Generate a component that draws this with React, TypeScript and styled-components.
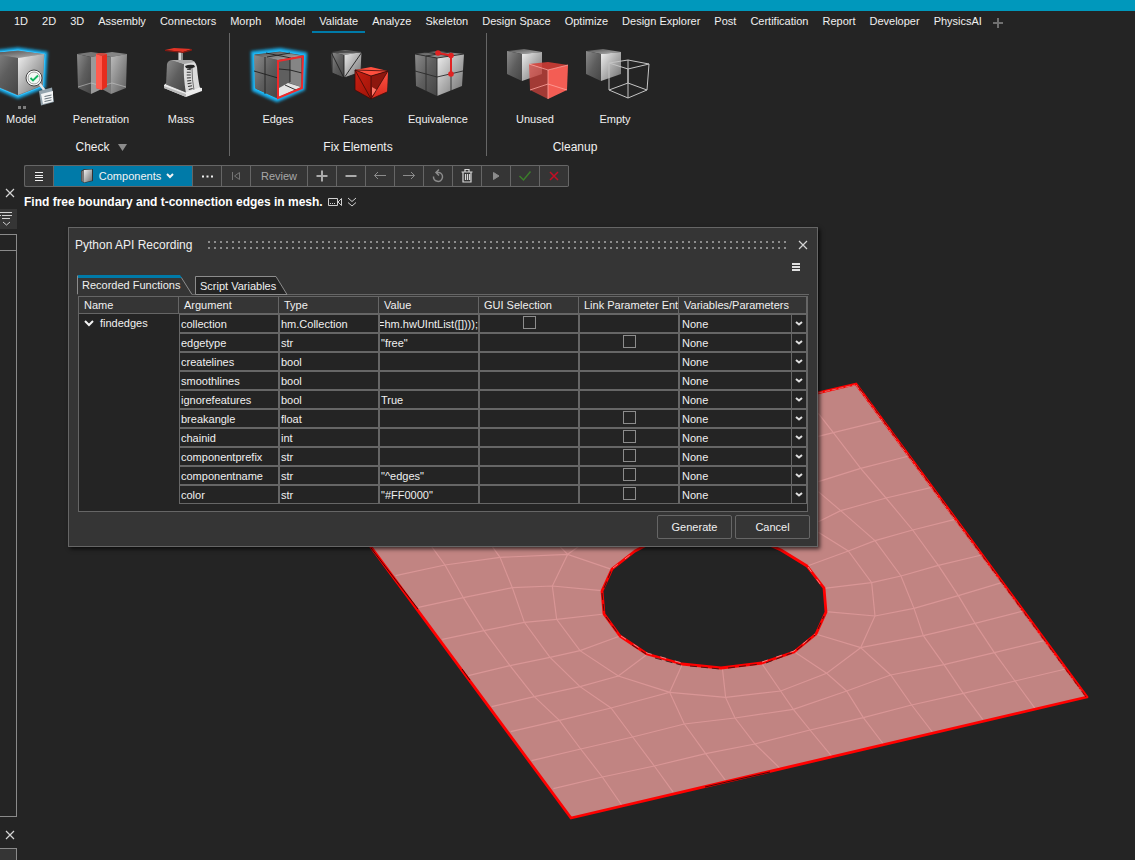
import React from "react";
import styled, { createGlobalStyle, css } from "styled-components";

const GlobalStyle = createGlobalStyle`
  *, *::before, *::after { box-sizing: border-box; }
  body {
    margin: 0;
    background: #242424;
    color: #f0f0f0;
    font-family: "Liberation Sans", Arial, sans-serif;
    font-size: 11px;
    overflow: hidden;
  }
  button, select, input { font: inherit; color: inherit; }
`;

const line = "#666666";

const Page = styled.div`
  display: flex;
  flex-direction: column;
  min-height: 100vh;
`;

const TitleStrip = styled.div`
  height: 11px;
  background: #0098bc;
`;

const PlainButton = styled.button`
  display: inline-flex;
  align-items: center;
  justify-content: center;
  margin: 0;
  padding: 0;
  border: 0;
  background: none;
`;

const MenuBar = styled.nav`
  display: flex;
  height: 22px;
  padding-left: 7px;
`;

const MenuTab = styled(PlainButton)<{ $active?: boolean }>`
  padding: 0 7px 2px;
  white-space: nowrap;
  border-top: 2px solid transparent;
  border-bottom: 2px solid ${(p) => (p.$active ? "#007aa8" : "transparent")};
`;

const AddTab = styled(PlainButton)`
  padding: 2px 0 0 3px;
`;

const Ribbon = styled.section`
  display: flex;
  height: 125px;
  overflow: hidden;
`;

const RibbonGroup = styled.div<{ $bleed?: boolean }>`
  display: flex;
  flex-direction: column;
  flex: none;
  padding: 9px 8px 0;
  height: 123px;
  border-right: 1px solid ${line};
  ${(p) => p.$bleed && css`margin-left: -27px;`}
  &:last-child { border-right: 0; }
`;

const RibbonItems = styled.div`
  display: flex;
`;

const RibbonItem = styled(PlainButton)`
  flex-direction: column;
  width: 80px;
  line-height: 18px;
  svg { display: block; }
`;

const GroupLabel = styled.div`
  display: flex;
  justify-content: center;
  align-items: center;
  gap: 8px;
  margin-top: 10px;
  line-height: 18px;
  font-size: 12px;
`;

const Body = styled.div`
  display: flex;
  flex: 1;
`;

const Sidebar = styled.aside`
  display: flex;
  flex-direction: column;
  width: 17px;
  flex: none;
`;

const SideClose = styled(PlainButton)<{ $first?: boolean }>`
  height: ${(p) => (p.$first ? 51 : 31)}px;
  padding: ${(p) => (p.$first ? "19px 0 0 3px" : "5px 0 0 3px")};
`;

const SideFilter = styled(PlainButton)`
  height: 20px;
  background: #353535;
`;

const SidePanel = styled.div`
  flex: 1;
  margin-top: 5px;
  border: 1px solid #8a8a8a;
  border-left: 0;
  &::before {
    content: "";
    display: block;
    height: 16px;
    border-bottom: 1px solid #8a8a8a;
  }
`;

const SideFooter = styled.div`
  height: 12px;
  border: 1px solid #8a8a8a;
  border-width: 1px 1px 0 0;
  background: #353535;
`;

const Main = styled.main`
  display: flex;
  flex-direction: column;
  flex: 1;
  min-width: 0;
`;

const Toolbar = styled.div`
  display: flex;
  align-self: flex-start;
  height: 22px;
  margin: 7px 0 0 7px;
  border: 1px solid ${line};
  border-right: 0;
  border-radius: 2px;
  background: #353535;
`;

const Tool = styled(PlainButton)<{ $w?: number; $primary?: boolean }>`
  width: ${(p) => p.$w ?? 29}px;
  gap: 5px;
  border-right: 1px solid ${line};
  color: #a8a8a8;
  ${(p) => p.$primary && css`
    padding-left: 8px;
    background: #007aa8;
    color: #f4f4f4;
  `}
`;

const Message = styled.div`
  display: flex;
  align-items: center;
  gap: 4px;
  height: 25px;
  padding: 4px 0 0 7px;
  font: bold 12px "Liberation Sans", Arial, sans-serif;
  color: #ffffff;
  span { white-space: nowrap; }
`;

const Viewport = styled.div`
  position: relative;
  flex: 1;
  min-height: 500px;
`;

const Scene = styled.svg`
  position: absolute;
  inset: 0;
  width: 100%;
  height: 100%;
`;

const Dialog = styled.section`
  position: absolute;
  top: 15px;
  left: 51px;
  width: 750px;
  padding: 0 9px 7px;
  border: 1px solid ${line};
  background: #353535;
  box-shadow: 2px 2px 4px rgba(0, 0, 0, 0.7);
`;

const DialogTitle = styled.header`
  display: flex;
  align-items: center;
  height: 34px;
  margin-left: -3px;
  h1 {
    margin: 0;
    font: 12px "Liberation Sans", Arial, sans-serif;
    white-space: nowrap;
  }
`;

const Grip = styled.div`
  flex: 1;
  height: 8px;
  margin: 0 11px 0 16px;
  background: conic-gradient(from 270deg at 2px 2px, #8c8c8c 90deg, transparent 0) 0 0 / 6px 6px;
`;

const DialogTools = styled.div`
  display: flex;
  justify-content: flex-end;
  align-items: flex-start;
  height: 13px;
  padding: 1px 8px 0 0;
`;

const Tabs = styled.div`
  display: flex;
  align-items: flex-end;
  height: 20px;
  margin: 0 -1px 1px;
  border-bottom: 1px solid ${line};
`;

const Tab = styled(PlainButton)<{ $w: number; $active?: boolean }>`
  position: relative;
  justify-content: flex-start;
  width: ${(p) => p.$w}px;
  height: ${(p) => (p.$active ? 20 : 19)}px;
  padding-left: 5px;
  margin-right: 1px;
  margin-bottom: -1px;
  span { position: relative; white-space: nowrap; }
  svg { position: absolute; top: 0; left: 0; }
`;

const Tree = styled.div`
  padding-bottom: 7px;
  border: 1px solid ${line};
  background: #242424;
`;

const Grid = styled.table`
  width: 100%;
  table-layout: fixed;
  border-collapse: separate;
  border-spacing: 0;
`;

const Head = styled.th`
  height: 17px;
  padding: 0 0 0 5px;
  border: 0 solid ${line};
  border-width: 0 1px 1px 0;
  background: #353535;
  font-weight: normal;
  line-height: 16px;
  text-align: left;
  white-space: nowrap;
  overflow: hidden;
`;

const Cell = styled.td<{ $center?: boolean }>`
  height: 19px;
  padding: 1px 0 0 1px;
  border: 1px solid ${line};
  line-height: 16px;
  white-space: nowrap;
  overflow: hidden;
  ${(p) => p.$center && css`padding: 0; text-align: center;`}
`;

const NameCell = styled.td`
  padding: 0 0 0 5px;
  vertical-align: top;
`;

const Branch = styled.div`
  display: flex;
  align-items: center;
  gap: 6px;
  height: 18px;
`;

const Tail = styled.div`
  display: flex;
  justify-content: flex-end;
  margin-left: -1px;
`;

const Check = styled.input`
  display: block;
  appearance: none;
  width: 13px;
  height: 13px;
  margin: 0 auto 2px;
  border: 1px solid #8c8c8c;
`;

const ComboCell = styled(Cell)`
  padding: 0 0 0 2px;
`;

const Combo = styled.div`
  display: flex;
  position: relative;
  height: 17px;
  select {
    flex: 1;
    appearance: none;
    padding: 1px 0 0;
    border: 0;
    background: none;
  }
  svg {
    position: absolute;
    top: 0;
    right: 0;
    width: 15px;
    height: 17px;
    border-left: 1px solid ${line};
    pointer-events: none;
  }
`;

const Actions = styled.footer`
  display: flex;
  justify-content: flex-end;
  gap: 3px;
  margin: 3px -2px 0 0;
`;

const Action = styled(PlainButton)`
  width: 75px;
  height: 24px;
  border: 1px solid ${line};
  border-radius: 2px;
`;

const menuItems = [
  "1D", "2D", "3D", "Assembly", "Connectors", "Morph", "Model", "Validate", "Analyze",
  "Skeleton", "Design Space", "Optimize", "Design Explorer", "Post", "Certification",
  "Report", "Developer", "PhysicsAI",
];

type Row = { arg: string; type: string; value?: string; gui?: boolean; link?: boolean; tail?: boolean };

const rows: Row[] = [
  { arg: "collection", type: "hm.Collection", value: "=hm.hwUIntList([])));", gui: true, tail: true },
  { arg: "edgetype", type: "str", value: '"free"', link: true },
  { arg: "createlines", type: "bool" },
  { arg: "smoothlines", type: "bool" },
  { arg: "ignorefeatures", type: "bool", value: "True" },
  { arg: "breakangle", type: "float", link: true },
  { arg: "chainid", type: "int", link: true },
  { arg: "componentprefix", type: "str", link: true },
  { arg: "componentname", type: "str", value: '"^edges"', link: true },
  { arg: "color", type: "str", value: '"#FF0000"', link: true },
];

function Defs() {
  return (
    <svg width="0" height="0" style={{ position: "absolute" }} aria-hidden="true">
      <defs>
        <linearGradient id="dark" x1="0" y1="0" x2="1" y2="1">
          <stop offset="0" stopColor="#8c8c8c" />
          <stop offset=".5" stopColor="#5e5e5e" />
          <stop offset="1" stopColor="#454545" />
        </linearGradient>
        <linearGradient id="light" x1="0" y1="0" x2="1" y2="1">
          <stop offset="0" stopColor="#f0f0f0" />
          <stop offset=".5" stopColor="#adadad" />
          <stop offset="1" stopColor="#6e6e6e" />
        </linearGradient>
        <linearGradient id="lid" x1="0" y1="0" x2="1" y2="1">
          <stop offset="0" stopColor="#4a4a4a" />
          <stop offset="1" stopColor="#b8b8b8" />
        </linearGradient>
        <linearGradient id="redDark" x1="0" y1="0" x2="1" y2="1">
          <stop offset="0" stopColor="#c81f12" />
          <stop offset="1" stopColor="#a01408" />
        </linearGradient>
        <linearGradient id="redLight" x1="0" y1="0" x2="0" y2="1">
          <stop offset="0" stopColor="#ff5546" />
          <stop offset="1" stopColor="#d6281c" />
        </linearGradient>
        <filter id="glow" x="-30%" y="-30%" width="160%" height="160%">
          <feGaussianBlur stdDeviation="1.8" />
        </filter>
      </defs>
    </svg>
  );
}

const RibbonSvg = ({ x, children }: { x: number; children: React.ReactNode }) => (
  <svg width="80" height="68" viewBox={`${x} 42 80 68`} aria-hidden="true">{children}</svg>
);

function ModelIcon() {
  return (
    <RibbonSvg x={-19}>
      <path d="M-9 53L18 50L45 54L43 86L18 96L-8 85Z" fill="#19b4f5" stroke="#19b4f5" strokeWidth="5" filter="url(#glow)" />
      <path d="M-9 53L18 50L45 54L43 86L18 96L-8 85Z" fill="#777" stroke="#35c4ff" strokeWidth="1" />
      <path d="M-9 53L18 51L44 54L18 58Z" fill="url(#lid)" />
      <path d="M-9 54L18 58V95L-8 84Z" fill="url(#dark)" />
      <path d="M18 58L44 54L43 85L18 95Z" fill="url(#light)" />
      <path d="M39 83L45 91" stroke="#e6e6e6" strokeWidth="2.5" />
      <circle cx="34" cy="78" r="8" fill="#fff" stroke="#444" strokeWidth="1" />
      <circle cx="34" cy="78" r="6" fill="#f2f8f4" stroke="#888" strokeWidth=".8" />
      <path d="M30.500 78L33 80.500L38 75.500" fill="none" stroke="#12b560" strokeWidth="1.8" />
      <path d="M39 91L52 87.500L54 102L41 105.500Z" fill="#93a3ad" />
      <path d="M41 94L53 91V101.500L43 104Z" fill="#f2f4f5" />
      <path d="M44.500 96.500L51.500 95M44.500 99L51.500 97.500M44.500 101.500L51.500 100" stroke="#65727a" strokeWidth="1" />
      <path d="M18 106h3v3h-3zM23 106h3v3h-3z" fill="#7d7d7d" />
    </RibbonSvg>
  );
}

function PenetrationIcon() {
  return (
    <RibbonSvg x={61}>
      <path d="M77 54L91 52L106 54L91 57Z" fill="#777" />
      <path d="M77 54L91 57V94L78 88Z" fill="url(#dark)" />
      <path d="M91 57L106 54V87L91 94Z" fill="#9a9a9a" />
      <path d="M98 54L112 52L127 54L111 57Z" fill="#858585" />
      <path d="M98 54L111 57V94L98 87Z" fill="#8a8a8a" opacity=".85" />
      <path d="M111 57L127 54L126 88L111 94Z" fill="url(#light)" opacity=".75" />
      <path d="M78 87L91 83L106 87M98 87L112 83L126 87" fill="none" stroke="#c6c6c6" strokeWidth=".6" />
      <path d="M96 54L101 53L107 54V87L102 90L96 88Z" fill="#e62c1e" />
      <path d="M96 54L102 56V90L96 88Z" fill="#ff5b4e" />
      <path d="M96 54L101 53L107 54L102 56Z" fill="#c94a41" />
    </RibbonSvg>
  );
}

function MassIcon() {
  return (
    <RibbonSvg x={141}>
      <path d="M178 52h5v10h-5z" fill="#8a8a8a" />
      <path d="M179 52h2v10h-2z" fill="#d4d4d4" />
      <path d="M165 50L174 48L192 49L183 52Z" fill="#e23325" />
      <path d="M165 50L183 52L192 49V50.500L183 53L165 51Z" fill="#8c1810" />
      <path d="M164 85L168 82L202 88V91L186 97L164 88Z" fill="#ececec" />
      <path d="M164 86L186 94V97L164 88Z" fill="#bbb" />
      <path d="M167 64Q168 60 173 60L185 63L186 93L166 85Z" fill="url(#dark)" />
      <path d="M173 60L190 60Q196 61 197 67Q198 80 200 88L186 93Q183 76 184 64Z" fill="#dcdcdc" />
      <path d="M171 60L190 60Q194 61 195 62L184 64Z" fill="#a8a8a8" />
      <path d="M185 66Q189 64 194 65L195 67L190 69L186 68Z" fill="#242424" />
      <path d="M189 69Q188 79 191 90" fill="none" stroke="#333" strokeWidth="4" strokeDasharray="1 1.800" />
      <path d="M192 68Q192 80 194 90" fill="none" stroke="#444" strokeWidth=".7" />
      <path d="M166 85L186 93L200 88" fill="none" stroke="#f5f5f5" strokeWidth=".8" />
    </RibbonSvg>
  );
}

function EdgesIcon() {
  return (
    <RibbonSvg x={238}>
      <path d="M254 54L280 51L304 55L302 88L277 99L255 89Z" fill="#19b4f5" stroke="#19b4f5" strokeWidth="6" filter="url(#glow)" />
      <path d="M254 54L280 51L304 55L302 88L277 99L255 89Z" fill="#555" stroke="#22bdfa" strokeWidth="1" />
      <path d="M254 55L280 52L303 56L278 60Z" fill="url(#lid)" />
      <path d="M254 55L278 60V98L255 88Z" fill="url(#dark)" />
      <path d="M278 60L303 56L302 87L278 98Z" fill="#5f5f5f" />
      <path d="M279 88L288 83L301 87L279 97Z" fill="#e4e4e4" />
      <path d="M290 59V83L301 87V57Z" fill="#858585" />
      <path d="M265 57V94M254 71L278 78M266 53L291 58M267 57L290 53M290 59V82M279 69L290 70L302 73M285 85L296 90" fill="none" stroke="#202020" strokeWidth=".9" />
      <path d="M278 61L303 56.500L302 88L278 98Z" fill="none" stroke="#f0292b" strokeWidth="2" />
    </RibbonSvg>
  );
}

function FacesIcon() {
  return (
    <RibbonSvg x={318}>
      <path d="M331 52L345 50L362 52L344 55Z" fill="url(#lid)" />
      <path d="M331 52L344 55V78L332 73Z" fill="url(#dark)" />
      <path d="M344 55L362 52L361 72L344 78Z" fill="url(#light)" />
      <path d="M331 52L344 78L362 52M331 52L362 52M332 52V73L344 78L361 72L362 52M344 55V78" fill="none" stroke="#202020" strokeWidth=".9" />
      <path d="M355 70L371 67L388 71L371 76Z" fill="#ff4f3e" />
      <path d="M355 70L371 76V99L355 90Z" fill="url(#redDark)" />
      <path d="M371 76L388 71L387 92L371 99Z" fill="#8d170e" />
      <path d="M388 71L387 92L371 99Z" fill="url(#redLight)" />
      <path d="M372 87L377 90L372 96Z" fill="#ff7466" />
      <path d="M355 70L388 71M355 70L371 99L388 71M355 70L371 76L388 71M371 76V99M355 70V90L371 99L387 92" fill="none" stroke="#3d0b07" strokeWidth=".8" />
    </RibbonSvg>
  );
}

function EquivalenceIcon() {
  return (
    <RibbonSvg x={398}>
      <path d="M415 54L437 51L464 54L437 58Z" fill="url(#lid)" />
      <path d="M415 54L437 58V96L416 86Z" fill="url(#dark)" />
      <path d="M437 58L464 54L462 86L437 96Z" fill="url(#light)" />
      <path d="M426 56V91M415 71L437 77L463 71M451 56V91M425 52L451 56M426 56L450 52M415 54L437 58L464 54M437 58V96" fill="none" stroke="#2a2a2a" strokeWidth=".9" />
      <path d="M438 53L451 55.500V74" fill="none" stroke="#e02222" strokeWidth="2" />
      <circle cx="438" cy="53" r="2.800" fill="#e02222" />
      <circle cx="451" cy="55.500" r="2.800" fill="#e02222" />
      <circle cx="451" cy="74" r="2.800" fill="#e02222" />
    </RibbonSvg>
  );
}

const GreyCube = ({ dx = 0 }: { dx?: number }) => (
  <g transform={`translate(${dx} 0)`}>
    <path d="M507 51L524 49L542 52L522 54Z" fill="url(#lid)" />
    <path d="M507 51L522 54V81L507 74Z" fill="url(#dark)" />
    <path d="M522 54L542 52V74L522 81Z" fill="url(#light)" />
  </g>
);

function UnusedIcon() {
  return (
    <RibbonSvg x={495}>
      <GreyCube />
      <path d="M529 64L548 62L568 65L548 70Z" fill="#d83d35" opacity=".85" />
      <path d="M529 64L548 70V99L530 90Z" fill="#d8453d" opacity=".7" />
      <path d="M548 70L568 65L567 90L548 99Z" fill="#ff6157" opacity=".95" />
      <path d="M530 90L548 84L567 90M529 64L548 70L568 65M548 70V99" fill="none" stroke="#ffa59e" strokeWidth=".8" />
    </RibbonSvg>
  );
}

function EmptyIcon() {
  return (
    <RibbonSvg x={575}>
      <GreyCube dx={79} />
      <path d="M609 63L628 60L649 64L628 69ZM609 63V90L628 98L647 90L649 64M628 69V98M628 60V83L609 90M628 83L647 90" fill="none" stroke="#c4c4c4" strokeWidth="1" />
    </RibbonSvg>
  );
}

const ribbonGroups = [
  { label: "Check", arrow: true, items: [["Model", ModelIcon], ["Penetration", PenetrationIcon], ["Mass", MassIcon]] },
  { label: "Fix Elements", arrow: false, items: [["Edges", EdgesIcon], ["Faces", FacesIcon], ["Equivalence", EquivalenceIcon]] },
  { label: "Cleanup", arrow: false, items: [["Unused", UnusedIcon], ["Empty", EmptyIcon]] },
] as { label: string; arrow: boolean; items: [string, React.FC][] }[];

const Stroke = ({ d, w = 16, h = 16, color = "currentColor", sw = 1 }: { d: string; w?: number; h?: number; color?: string; sw?: number }) => (
  <svg width={w} height={h} viewBox={`0 0 ${w} ${h}`} fill="none" stroke={color} strokeWidth={sw} aria-hidden="true">
    <path d={d} />
  </svg>
);

const CloseGlyph = () => <Stroke w={10} h={10} color="#d4d4d4" sw={1.2} d="M1 1L9 9M9 1L1 9" />;

const tools = [
  { name: "Previous", d: "M4.500 4V12M11.500 4.500V11.500L6.500 8Z", color: "#757575", sw: 1 },
  { name: "Review" },
  { name: "Add", d: "M8 2.500V13.500M2.500 8H13.500", color: "#ababab", sw: 2 },
  { name: "Remove", d: "M2.500 8H13.500", color: "#ababab", sw: 2 },
  { name: "Back", d: "M14 7.500H2.500M6 4L2.500 7.500L6 11", color: "#8c8c8c", sw: 1 },
  { name: "Forward", d: "M2 7.500H13.500M10 4L13.500 7.500L10 11", color: "#8c8c8c", sw: 1 },
  { name: "Reset", d: "M6 4.500H9A4.500 4.500 0 1 1 3.500 8.500M9 1.500L6 4.500L9 7.500", color: "#8c8c8c", sw: 1.5 },
  { name: "Delete", d: "M2.500 4H13.500M6 4V1.500H10V4M4 4V14H12V4M6.500 6V12M8.500 6V12M10.500 6V12", color: "#d8d8d8", sw: 1.2 },
  { name: "Play", d: "M5.500 4.500V11.500L11 8Z", color: "#8c8c8c", sw: 1 },
  { name: "Apply", d: "M2.500 8L6.500 12L13.500 3.500", color: "#3b7d2a", sw: 1.5 },
  { name: "Cancel operation", d: "M4 4L12 12M12 4L4 12", color: "#c40e24", sw: 1.5 },
];

const meshLeft = [
  "107,107 255,75 420,52 623,43 755,88",
  "175,202 310,173 457,143 577,138 725,152",
  "247,298 372,272 493,247 590,238 733,222",
  "325,407 450,377 570,352 660,332 780,288",
  "395,500 523,470 660,440 775,408 862,343",
  "452,575 598,541 753,504 929,457 967,373",
  "515,662 662,627 818,591 973,552 1125,534",
  "580,746 727,711 883,678 1037,641 1185,612",
  "215,20 255,75 310,173 372,272 450,377 523,470 598,541 662,627 727,711 785,795",
  "397,20 420,52 457,143 493,247 570,352 660,440 753,504 818,591 883,678 940,757",
  "600,20 623,43 577,138 590,238 660,332 775,408 929,457 973,552 1037,641 1097,722",
  "655,20 623,43",
  "929,457 1097,472",
];

const meshRight = [
  "547,152 400,188 355,199",
  "627,258 482,295 355,335",
  "695,352 558,384 422,422 355,455",
  "765,448 638,480 525,512 445,543 322,588",
  "845,555 715,586 603,618 515,638 372,655",
  "905,638 775,677 642,715 525,738 378,725",
  "970,723 825,760 670,797 482,833 347,792",
  "1032,812 883,848 732,884 572,915 440,963 280,1018 105,1044",
  "1097,897 945,933 790,970 635,1005 490,1043 330,1080 165,1122",
  "482,833 380,910 242,963 77,982",
  "355,130 400,188 482,295 558,384 638,480 715,586 775,677 825,760 883,848 945,933 1005,1015",
  "355,365 422,422 525,512 603,618 642,715 670,797 732,884 790,970 848,1048",
  "355,487 445,543 515,638 525,738 482,833 572,915 635,1005 697,1086",
  "283,845 380,910 440,963 490,1043 550,1122",
  "185,880 242,963 280,1018 330,1080 396,1160",
  "67,893 77,983 105,1044 165,1122 243,1198",
];

const holePath =
  "M690 530L660 538L635 551L612 569L602 591L604 614L620 636L647 654L682 664L721 668L762 663L794 652L816 634L826 612L824 588L807 566L781 550L740 532Z";

function MeshScene() {
  return (
    <Scene viewBox="17 212 1118 648" aria-label="Mesh model">
      <path d={"M856 384L1087 697L571 818L340 505Z" + holePath} fill="#c18482" fillRule="evenodd" />
      <g fill="none" stroke="#d99696" strokeWidth="3.500">
        <g transform="translate(360 540) scale(.33333)">
          {meshLeft.map((p) => <polyline key={p} points={p} />)}
        </g>
        <g transform="translate(700 370) scale(.33333)">
          {meshRight.map((p) => <polyline key={p} points={p} />)}
        </g>
      </g>
      <g fill="none" stroke="#ff0000" strokeWidth="2.800" strokeLinejoin="round">
        <path d="M856 384L1087 697L571 818L340 505Z" />
        <path d={holePath} />
      </g>
      <g fill="none" strokeWidth=".8">
        <path d="M371 548L418 609M462 669L470 680M705 787L770 772" stroke="#2a0000" />
        <path d="M856 385L1085 696M818 393L855 385" stroke="#e08080" strokeDasharray="5 2" />
        <path d="M858 386L1086 697" stroke="#700" strokeDasharray="9 5" />
        <path d="M602 593L604 612M606 617L619 635M632 645L646 654M655 658L681 665M690 666L720 669M728 668L760 664M766 663L792 653M797 650L815 635M818 629L824 616M604 588L611 571" stroke="#2a1010" strokeDasharray="7 4" />
        <path d="M621 636L647 653L682 663M762 662L794 651L815 634M613 568L634 552M808 567L823 588" stroke="#f0a0a0" strokeDasharray="6 9" />
      </g>
    </Scene>
  );
}

function ParameterTable() {
  return (
    <Tree>
      <Grid>
        <colgroup>
          {[100, 100, 100, 100, 100, 100].map((w, i) => <col key={i} width={w} />)}
          <col />
        </colgroup>
        <thead>
          <tr>
            {["Name", "Argument", "Type", "Value", "GUI Selection", "Link Parameter Entit", "Variables/Parameters"].map((h) => (
              <Head key={h} scope="col">{h}</Head>
            ))}
          </tr>
        </thead>
        <tbody>
          {rows.map((r, i) => (
            <tr key={r.arg}>
              {i === 0 && (
                <NameCell rowSpan={rows.length}>
                  <Branch>
                    <Stroke w={10} h={8} sw={2} color="#f4f4f4" d="M1 2L5 6L9 2" />
                    findedges
                  </Branch>
                </NameCell>
              )}
              <Cell>{r.arg}</Cell>
              <Cell>{r.type}</Cell>
              <Cell>{r.tail ? <Tail>{r.value}</Tail> : r.value}</Cell>
              <Cell $center>{r.gui && <Check type="checkbox" aria-label={`GUI selection for ${r.arg}`} />}</Cell>
              <Cell $center>{r.link && <Check type="checkbox" aria-label={`Link parameter entity for ${r.arg}`} />}</Cell>
              <ComboCell>
                <Combo>
                  <select aria-label={`Variable for ${r.arg}`} defaultValue="None">
                    <option>None</option>
                  </select>
                  <svg viewBox="0 0 14 17" aria-hidden="true">
                    <path d="M4 7L7 9.500L10 7" fill="none" stroke="#e0e0e0" strokeWidth="2" />
                  </svg>
                </Combo>
              </ComboCell>
            </tr>
          ))}
        </tbody>
      </Grid>
    </Tree>
  );
}

function RecordingDialog() {
  return (
    <Dialog role="dialog" aria-labelledby="recording-title">
      <DialogTitle>
        <h1 id="recording-title">Python API Recording</h1>
        <Grip />
        <PlainButton aria-label="Close"><CloseGlyph /></PlainButton>
      </DialogTitle>
      <DialogTools>
        <PlainButton aria-label="Dialog menu">
          <Stroke w={8} h={8} sw={2} color="#e0e0e0" d="M0 1H8M0 4H8M0 7H8" />
        </PlainButton>
      </DialogTools>
      <Tabs role="tablist">
        <Tab role="tab" aria-selected="true" $w={117} $active>
          <svg width="117" height="20" aria-hidden="true">
            <path d="M.5 20V.5H103L115 19.500V20Z" fill="#353535" />
            <path d="M.5 19V.5M104 2L115 19.500" fill="none" stroke="#8c8c8c" />
            <path d="M1 0H103L105 3H1Z" fill="#007aa8" />
          </svg>
          <span>Recorded Functions</span>
        </Tab>
        <Tab role="tab" aria-selected="false" $w={93}>
          <svg width="93" height="19" aria-hidden="true">
            <path d="M.5 18.500V.5H81L92 18.500Z" fill="#242424" stroke="#8c8c8c" />
          </svg>
          <span>Script Variables</span>
        </Tab>
      </Tabs>
      <ParameterTable />
      <Actions>
        <Action>Generate</Action>
        <Action>Cancel</Action>
      </Actions>
    </Dialog>
  );
}

export default function App() {
  return (
    <Page>
      <GlobalStyle />
      <Defs />
      <TitleStrip />
      <MenuBar>
        {menuItems.map((m) => <MenuTab key={m} $active={m === "Validate"}>{m}</MenuTab>)}
        <AddTab aria-label="Add tab">
          <Stroke w={12} h={12} sw={2} color="#707070" d="M6 1V11M1 6H11" />
        </AddTab>
      </MenuBar>
      <Ribbon>
        {ribbonGroups.map((g, i) => (
          <RibbonGroup key={g.label} $bleed={i === 0}>
            <RibbonItems>
              {g.items.map(([name, Icon]) => (
                <RibbonItem key={name}>
                  <Icon />
                  {name}
                </RibbonItem>
              ))}
            </RibbonItems>
            <GroupLabel>
              {g.label}
              {g.arrow && <svg width="9" height="7" aria-hidden="true"><path d="M0 0H9L4.500 7Z" fill="#8c8c8c" /></svg>}
            </GroupLabel>
          </RibbonGroup>
        ))}
      </Ribbon>
      <Body>
        <Sidebar>
          <SideClose $first aria-label="Close browser"><CloseGlyph /></SideClose>
          <SideFilter aria-label="Filter">
            <Stroke w={17} h={16} color="#d0d0d0" d="M0 1.500H12M2 4.500H12M2 7.500H10M0 4.500H1M3 11L6.500 14L10 11" />
          </SideFilter>
          <SidePanel />
          <SideClose aria-label="Close panel"><CloseGlyph /></SideClose>
          <SideFooter />
        </Sidebar>
        <Main>
          <Toolbar role="toolbar">
            <Tool aria-label="Menu">
              <Stroke w={8} h={9} sw={1} color="#f0f0f0" d="M0 .5H8M0 3.500H8M0 5.500H8M0 8.500H8" />
            </Tool>
            <Tool $w={139} $primary>
              <svg width="14" height="16" aria-hidden="true">
                <path d="M1 3L4 1L13 1V13L4 15L1 13Z" fill="#333" />
                <path d="M4 2L12 1.500V12.500L4 14.500Z" fill="url(#light)" />
                <path d="M1.500 3.500L4 2V14.500L1.500 13Z" fill="#777" />
              </svg>
              Components
              <Stroke w={8} h={6} sw={2} d="M1 1L4 4L7 1" />
            </Tool>
            <Tool aria-label="More">
              <Stroke w={11} h={3} sw={2} color="#f0f0f0" d="M0 1.500H2M4.500 1.500H6.500M9 1.500H11" />
            </Tool>
            {tools.map((t) => (
              <Tool key={t.name} aria-label={t.name} $w={t.d ? 29 : 57}>
                {t.d ? (
                  <svg width="16" height="16" fill={t.name === "Play" ? t.color : "none"} stroke={t.color} strokeWidth={t.sw} aria-hidden="true">
                    <path d={t.d} />
                  </svg>
                ) : t.name}
              </Tool>
            ))}
          </Toolbar>
          <Message>
            <span>Find free boundary and t-connection edges in mesh.</span>
            <PlainButton aria-label="Play video">
              <Stroke w={16} h={10} color="#d0d0d0" d="M1.500 1.500H10.500V8.500H1.500ZM11 5L14.500 1.500V8.500ZM3 6.500H4M5 6.500H6M7 6.500H8" />
            </PlainButton>
            <PlainButton aria-label="Expand">
              <Stroke w={10} h={10} color="#d0d0d0" d="M1 1L5 4.500L9 1M1 5.500L5 9L9 5.500" />
            </PlainButton>
          </Message>
          <Viewport>
            <MeshScene />
            <RecordingDialog />
          </Viewport>
        </Main>
      </Body>
    </Page>
  );
}
